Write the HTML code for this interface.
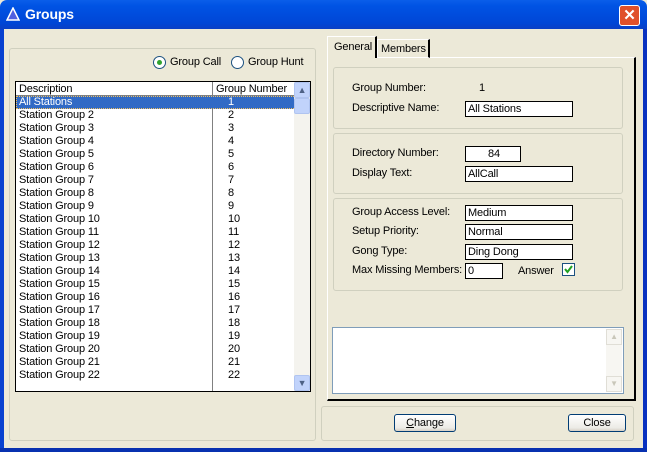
<!DOCTYPE html>
<html><head><style>
*{margin:0;padding:0;box-sizing:border-box}
body{width:647px;height:452px;overflow:hidden;background:#ECE9D8;font-family:"Liberation Sans",sans-serif;font-size:11px;color:#000;position:relative;letter-spacing:-0.15px}
.a{position:absolute}
.gb{position:absolute;border:1px solid #D0D0BF;border-radius:3px}
.in{position:absolute;background:#fff;border:1px solid #000;height:16px;padding-left:2px;line-height:15px}
.lb{position:absolute;left:352px}
.btn{position:absolute;border:1px solid #003C74;border-radius:3px;background:linear-gradient(#fff,#ECEBE6 80%,#D6D0C5);text-align:center;line-height:16px;height:18px}
.row{height:13px;line-height:13px;position:relative}
.row span{position:absolute;left:209px}
</style></head><body>
<div class="a" style="left:0;top:0;width:647px;height:29px;background:linear-gradient(#0A5EEA,#0053E4 20%,#0046D6 80%,#0A3FC4);border-radius:7px 7px 0 0"></div>
<div class="a" style="left:0;top:29px;width:4px;height:423px;background:#0841D0"></div>
<div class="a" style="left:643px;top:29px;width:4px;height:423px;background:#0831C0"></div>
<div class="a" style="left:0;top:448px;width:647px;height:4px;background:#0831B0"></div>
<svg class="a" style="left:6px;top:7px" width="14" height="14"><polygon points="7,1 13,13 1,13" fill="#5060E0" stroke="#fff" stroke-width="1.5"/></svg>
<div class="a" style="left:25px;top:6px;color:#fff;font-weight:bold;font-size:14px">Groups</div>
<div class="a" style="left:619px;top:5px;width:21px;height:21px;border:1px solid #fff;border-radius:3px;background:#E0502A;color:#fff;font-weight:bold;font-size:15px;text-align:center;line-height:19px">✕</div>

<div class="gb" style="left:9px;top:48px;width:307px;height:393px"></div>
<div class="a" style="left:153px;top:56px;width:13px;height:13px;border:1px solid #1C5180;border-radius:50%;background:#fff"></div>
<div class="a" style="left:157px;top:60px;width:5px;height:5px;border-radius:50%;background:#2FA32F"></div>
<div class="a" style="left:170px;top:56px">Group Call</div>
<div class="a" style="left:231px;top:56px;width:13px;height:13px;border:1px solid #1C5180;border-radius:50%;background:#fff"></div>
<div class="a" style="left:248px;top:56px">Group Hunt</div>

<div class="a" style="left:15px;top:81px;width:296px;height:311px;border:1px solid #000;background:#fff;overflow:hidden">
 <div class="a" style="left:196px;top:0;width:1px;height:310px;background:#808080"></div>
 <div style="padding-left:3px;height:14px;line-height:14px;border-bottom:1px solid #808080;position:relative">Description<span class="a" style="left:200px">Group Number</span></div>
 <div class="row" style="background:#316AC5;color:#fff;outline:1px dotted #F0C060;outline-offset:-1px;padding-left:3px">All Stations<span style="left:212px">1</span></div>
 <div style="padding-left:3px">
 <div class="row">Station Group 2<span>2</span></div><div class="row">Station Group 3<span>3</span></div><div class="row">Station Group 4<span>4</span></div><div class="row">Station Group 5<span>5</span></div><div class="row">Station Group 6<span>6</span></div><div class="row">Station Group 7<span>7</span></div><div class="row">Station Group 8<span>8</span></div><div class="row">Station Group 9<span>9</span></div><div class="row">Station Group 10<span>10</span></div><div class="row">Station Group 11<span>11</span></div><div class="row">Station Group 12<span>12</span></div><div class="row">Station Group 13<span>13</span></div><div class="row">Station Group 14<span>14</span></div><div class="row">Station Group 15<span>15</span></div><div class="row">Station Group 16<span>16</span></div><div class="row">Station Group 17<span>17</span></div><div class="row">Station Group 18<span>18</span></div><div class="row">Station Group 19<span>19</span></div><div class="row">Station Group 20<span>20</span></div><div class="row">Station Group 21<span>21</span></div><div class="row">Station Group 22<span>22</span></div>
 </div>
 <div class="a" style="left:278px;top:0;width:16px;height:309px;background:#F4F3EE"></div>
 <div class="a" style="left:278px;top:0;width:16px;height:16px;background:#C1D3FB;border:1px solid #B0C4F0;border-radius:2px;color:#4D6185;font-size:9px;text-align:center;line-height:14px">▲</div>
 <div class="a" style="left:278px;top:16px;width:16px;height:16px;background:#C1D3FB;border:1px solid #B0C4F0;border-radius:2px"></div>
 <div class="a" style="left:278px;top:293px;width:16px;height:16px;background:#C1D3FB;border:1px solid #B0C4F0;border-radius:2px;color:#4D6185;font-size:9px;text-align:center;line-height:14px">▼</div>
</div>

<div class="a" style="left:327px;top:57px;width:309px;height:344px;background:#ECE9D8;border:1px solid #fff;border-right:2px solid #000;border-bottom:2px solid #000"></div>
<div class="a" style="left:377px;top:39px;width:53px;height:19px;border:1px solid #fff;border-right:2px solid #000;padding:3px 0 0 3px;background:#ECE9D8">Members</div>
<div class="a" style="left:327px;top:36px;width:50px;height:22px;border:1px solid #fff;border-bottom:none;border-right:2px solid #000;padding:4px 0 0 6px;background:#ECE9D8">General</div>

<div class="gb" style="left:333px;top:67px;width:290px;height:62px"></div>
<div class="lb" style="top:82px">Group Number:</div><div class="a" style="left:479px;top:82px">1</div>
<div class="lb" style="top:102px">Descriptive Name:</div><div class="in" style="left:465px;top:101px;width:108px">All Stations</div>
<div class="gb" style="left:333px;top:133px;width:290px;height:61px"></div>
<div class="lb" style="top:147px">Directory Number:</div><div class="in" style="left:465px;top:146px;width:56px;text-align:center">84</div>
<div class="lb" style="top:167px">Display Text:</div><div class="in" style="left:465px;top:166px;width:108px">AllCall</div>
<div class="gb" style="left:333px;top:198px;width:290px;height:93px"></div>
<div class="lb" style="top:206px">Group Access Level:</div><div class="in" style="left:465px;top:205px;width:108px">Medium</div>
<div class="lb" style="top:225px">Setup Priority:</div><div class="in" style="left:465px;top:224px;width:108px">Normal</div>
<div class="lb" style="top:245px">Gong Type:</div><div class="in" style="left:465px;top:244px;width:108px">Ding Dong</div>
<div class="lb" style="top:264px">Max Missing Members:</div><div class="in" style="left:465px;top:263px;width:38px">0</div>
<div class="a" style="left:518px;top:265px">Answer</div>
<div class="a" style="left:562px;top:263px;width:13px;height:13px;border:1px solid #1C5180;background:#fff"></div>
<svg class="a" style="left:563px;top:264px" width="11" height="11"><path d="M2 5 L4.5 8 L9 2" stroke="#21A121" stroke-width="2" fill="none"/></svg>

<div class="a" style="left:332px;top:327px;width:292px;height:67px;background:#fff;border:1px solid #7F9DB9"></div>
<div class="a" style="left:606px;top:329px;width:16px;height:63px;background:#F7F6F2"></div>
<div class="a" style="left:606px;top:329px;width:16px;height:16px;border:1px solid #E0DED6;color:#C9C7BA;font-size:8px;text-align:center;line-height:14px">▲</div>
<div class="a" style="left:606px;top:376px;width:16px;height:16px;border:1px solid #E0DED6;color:#C9C7BA;font-size:8px;text-align:center;line-height:14px">▼</div>

<div class="gb" style="left:321px;top:406px;width:313px;height:35px"></div>
<div class="btn" style="left:394px;top:414px;width:62px"><u>C</u>hange</div>
<div class="btn" style="left:568px;top:414px;width:58px">Close</div>
</body></html>
